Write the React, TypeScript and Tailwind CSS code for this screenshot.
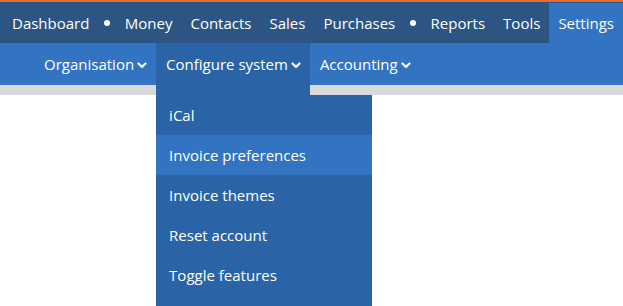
import React from "react";

const topItems: (string | null)[] = [
  "Dashboard",
  null,
  "Money",
  "Contacts",
  "Sales",
  "Purchases",
  null,
  "Reports",
  "Tools",
];

const menuItems = [
  "iCal",
  "Invoice preferences",
  "Invoice themes",
  "Reset account",
  "Toggle features",
];

function Chevron() {
  return (
    <svg width="10" height="7" viewBox="0 0 10 7" className="ml-[3px] mt-[3px]">
      <polyline
        points="1.5,1.5 5,5 8.5,1.5"
        fill="none"
        stroke="white"
        strokeWidth="2.2"
        strokeLinecap="round"
        strokeLinejoin="round"
      />
    </svg>
  );
}

function App() {
  return (
    <div className="w-[623px] h-[306px] overflow-hidden bg-white font-['Open_Sans',sans-serif] text-[15px] text-white">
      <nav className="h-[43px] border-t-2 border-[#ec6a2c] bg-[#2c5584] pt-px pl-[3px] flex">
        {topItems.map((item, i) =>
          item ? (
            <a key={i} className="h-[40px] px-[9px] flex items-center">
              {item}
            </a>
          ) : (
            <span key={i} className="h-[40px] w-[18px] flex items-center justify-center">
              <span className="w-[6px] h-[6px] rounded-full bg-white" />
            </span>
          )
        )}
        <a className="ml-auto h-[40px] pl-[9px] pr-[9px] flex items-center bg-[#3274c1]">
          Settings
        </a>
      </nav>
      <div className="h-[42px] bg-[#3274c1] flex pl-[34px]">
        <a className="h-full pl-[10px] pr-[9px] flex items-center">
          Organisation
          <Chevron />
        </a>
        <div className="relative h-full">
          <a className="h-full pl-[10px] pr-[9px] flex items-center bg-[#2a64a6]">
            Configure system
            <Chevron />
          </a>
          <div className="absolute left-0 top-full w-full h-[10px] bg-[#2a64a6] z-10" />
          <ul className="absolute left-0 top-[52px] w-[216px] bg-[#2a64a6] pb-[20px] z-10">
            {menuItems.map((m, i) => (
              <li
                key={m}
                className={
                  i === 1
                    ? "h-[40px] pl-[13px] flex items-center bg-[#3274c1]"
                    : "h-[40px] pl-[13px] flex items-center"
                }
              >
                {m}
              </li>
            ))}
          </ul>
        </div>
        <a className="h-full px-[10px] flex items-center">
          Accounting
          <Chevron />
        </a>
      </div>
      <div className="h-[10px] bg-[#d9d9d9]" />
    </div>
  );
}

export default App;
